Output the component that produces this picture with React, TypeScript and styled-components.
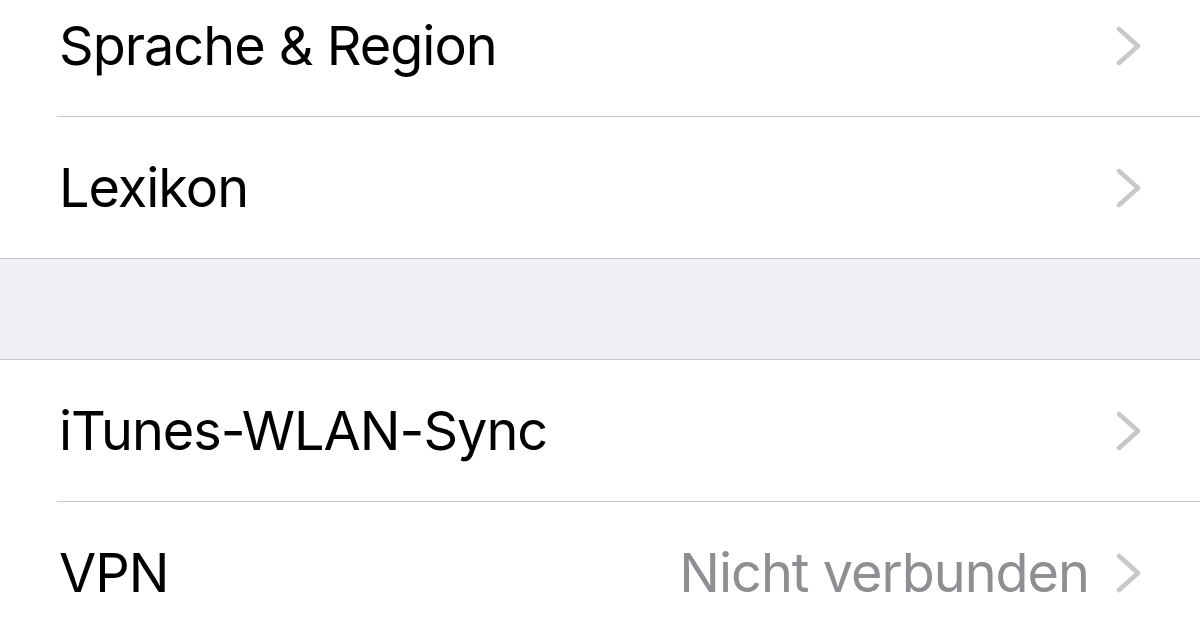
import React from "react";
import styled, { createGlobalStyle } from "styled-components";

const Global = createGlobalStyle`
  html, body { margin: 0; padding: 0; background: #ffffff; }
  body { font-family: Inter, "Noto Sans", "Liberation Sans", sans-serif; }
`;

const Screen = styled.div`
  width: 1200px;
  height: 630px;
  overflow: hidden;
  background: #efeff4;
  display: flex;
  flex-direction: column;
`;

const Group = styled.div<{ $offset?: number }>`
  background: #ffffff;
  margin-top: ${(p) => p.$offset ?? 0}px;
  border-top: 1px solid #c8c7cc;
  border-bottom: 1px solid #c8c7cc;
  display: flex;
  flex-direction: column;
  flex-shrink: 0;
`;

const Spacer = styled.div`
  height: 100px;
  flex-shrink: 0;
`;

const Row = styled.div`
  height: 141px;
  padding-left: 59px;
  display: flex;
  position: relative;
  & + & {
    border-top: 1px solid transparent;
  }
  & + &::before {
    content: "";
    position: absolute;
    top: -1px;
    left: 57px;
    right: 0;
    height: 1px;
    background: #c8c7cc;
  }
`;

const RowInner = styled.div`
  flex: 1;
  display: flex;
  align-items: center;
  padding-right: 58px;
`;

const Label = styled.span`
  flex: 1;
  font-size: 54px;
  color: #000000;
  letter-spacing: -1px;
`;

const Value = styled.span`
  font-size: 54px;
  color: #8e8e93;
  letter-spacing: -1px;
  margin-right: 27px;
`;

const Chevron = () => (
  <svg width="26" height="40" viewBox="0 0 26 40" aria-hidden>
    <path
      d="M3 3 L22 20 L3 37"
      fill="none"
      stroke="#c7c7cc"
      strokeWidth="4.5"
      strokeLinecap="round"
      strokeLinejoin="round"
    />
  </svg>
);

type Item = { label: string; value?: string };

const SettingsRow = ({ label, value }: Item) => (
  <Row>
    <RowInner>
      <Label>{label}</Label>
      {value && <Value>{value}</Value>}
      <Chevron />
    </RowInner>
  </Row>
);

export default function App() {
  return (
    <>
      <Global />
      <Screen>
        <Group $offset={-26}>
          <SettingsRow label="Sprache & Region" />
          <SettingsRow label="Lexikon" />
        </Group>
        <Spacer />
        <Group>
          <SettingsRow label="iTunes-WLAN-Sync" />
          <SettingsRow label="VPN" value="Nicht verbunden" />
        </Group>
      </Screen>
    </>
  );
}
